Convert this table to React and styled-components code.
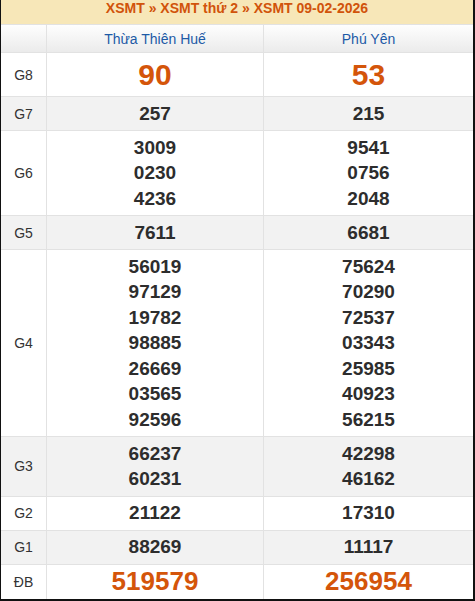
import React from 'react';
import styled, { createGlobalStyle } from 'styled-components';

const GlobalStyle = createGlobalStyle`
  body {
    margin: 0;
    background: #fff;
    font-family: "Liberation Sans", Arial, sans-serif;
  }
`;

const Board = styled.div`
  width: 475px;
  box-sizing: border-box;
  display: grid;
  grid-template-columns: 45px 216px 209px;
  gap: 1px;
  background: #e2e2e2;
  border-left: 1px solid #111;
  border-right: 2px solid #111;
  border-bottom: 2px solid #111;
`;

const Title = styled.div`
  grid-column: 1 / -1;
  height: 24px;
  box-sizing: border-box;
  padding-bottom: 8px;
  background: #f7e7b8;
  text-align: center;
  font-size: 14px;
  line-height: 16px;
  font-weight: bold;
  color: #d1530b;
`;

const Crumb = styled.a`
  color: inherit;
  text-decoration: none;
`;

const HeadCell = styled.div`
  height: 27px;
  background: linear-gradient(to bottom, #fefefe, #ebebeb);
  display: flex;
  align-items: center;
  justify-content: center;
  font-size: 14px;
  color: #1d5aa6;
`;

const Label = styled.div`
  background: ${({ $alt }) => ($alt ? '#f2f2f2' : '#fff')};
  display: flex;
  align-items: center;
  justify-content: center;
  font-size: 14px;
  color: #333;
`;

const sizes = {
  normal: { font: 19, line: 25.5, color: '#2d2d2d' },
  big: { font: 30, line: 35.5, color: '#d4550a' },
  special: { font: 26, line: 26.5, color: '#d4550a' },
};

const NumCell = styled.div`
  background: ${({ $alt }) => ($alt ? '#f2f2f2' : '#fff')};
  padding: 3.75px 0;
  text-align: center;
  font-weight: bold;
  font-size: ${({ $kind }) => sizes[$kind].font}px;
  line-height: ${({ $kind }) => sizes[$kind].line}px;
  color: ${({ $kind }) => sizes[$kind].color};
`;

const Num = styled.div``;

const provinces = ['Thừa Thiên Huế', 'Phú Yên'];

const prizes = [
  { label: 'G8', kind: 'big', a: ['90'], b: ['53'] },
  { label: 'G7', kind: 'normal', a: ['257'], b: ['215'] },
  { label: 'G6', kind: 'normal', a: ['3009', '0230', '4236'], b: ['9541', '0756', '2048'] },
  { label: 'G5', kind: 'normal', a: ['7611'], b: ['6681'] },
  {
    label: 'G4',
    kind: 'normal',
    a: ['56019', '97129', '19782', '98885', '26669', '03565', '92596'],
    b: ['75624', '70290', '72537', '03343', '25985', '40923', '56215'],
  },
  { label: 'G3', kind: 'normal', a: ['66237', '60231'], b: ['42298', '46162'] },
  { label: 'G2', kind: 'normal', a: ['21122'], b: ['17310'] },
  { label: 'G1', kind: 'normal', a: ['88269'], b: ['11117'] },
  { label: 'ĐB', kind: 'special', a: ['519579'], b: ['256954'] },
];

export default function App() {
  return (
    <>
      <GlobalStyle />
      <Board>
        <Title>
          <Crumb href="#">XSMT</Crumb> » <Crumb href="#">XSMT thứ 2</Crumb> »{' '}
          <Crumb href="#">XSMT 09-02-2026</Crumb>
        </Title>
        <HeadCell />
        {provinces.map((p) => (
          <HeadCell key={p}>{p}</HeadCell>
        ))}
        {prizes.map((row, i) => {
          const alt = i % 2 === 1;
          return (
            <React.Fragment key={row.label}>
              <Label $alt={alt}>{row.label}</Label>
              {[row.a, row.b].map((nums, j) => (
                <NumCell key={j} $alt={alt} $kind={row.kind}>
                  {nums.map((n) => (
                    <Num key={n}>{n}</Num>
                  ))}
                </NumCell>
              ))}
            </React.Fragment>
          );
        })}
      </Board>
    </>
  );
}
